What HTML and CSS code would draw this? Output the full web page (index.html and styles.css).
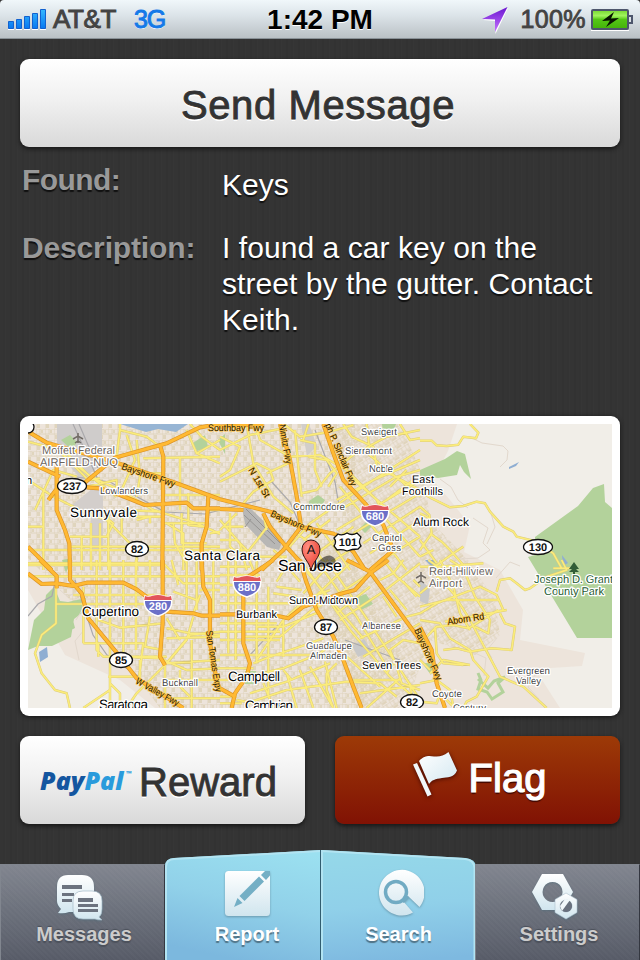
FILE: index.html
```html
<!DOCTYPE html>
<html lang="en">
<head>
<meta charset="utf-8">
<title>Found: Keys</title>
<link rel="stylesheet" href="styles.css">
</head>
<body>
<div class="screen">
  <header class="status">
    <div class="status-side">
      <svg class="signal" width="39" height="22" viewBox="0 0 39 22">
        <defs><linearGradient id="sig" x2="0" y2="1"><stop stop-color="#35b8ff"/><stop offset="1" stop-color="#0878f0"/></linearGradient></defs>
        <g fill="url(#sig)" stroke="#1261cf"><path d="M.5 13.500h5v7h-5zM8.500 11.500h5v9h-5zM16.500 8.500h5v12h-5zM24.500 5.500h5v15h-5zM32.500 1.500h5v19h-5z"/></g>
        <path d="M0 21.500h6M8 21.500h6M16 21.500h6M24 21.500h6M32 21.500h6" stroke="#fff"/>
      </svg>
      <span class="carrier">AT&amp;T</span><span class="network">3G</span>
    </div>
    <time class="clock">1:42 PM</time>
    <div class="status-side status-right">
      <svg class="arrow" width="27" height="28" viewBox="0 0 27 28">
        <defs><linearGradient id="purple" x2="0" y2="1"><stop stop-color="#6a16d0"/><stop offset="1" stop-color="#c773ff"/></linearGradient></defs>
        <path d="M1 14 26 2 13.500 28 13 15z" fill="#fff"/><path d="M0 13 25.500 1 13 26V13.500z" fill="url(#purple)"/>
      </svg>
      <span class="percent">100%</span>
      <svg width="43" height="22" viewBox="0 0 43 22">
        <defs><linearGradient id="batt" x2="0" y2="1"><stop stop-color="#74d62d"/><stop offset=".3" stop-color="#a1f45e"/><stop offset=".5" stop-color="#55c716"/><stop offset="1" stop-color="#43b20a"/></linearGradient></defs>
        <path d="M0 21.500h38" stroke="#fff"/>
        <rect x="1" y="1" width="36" height="19" rx="1" fill="url(#batt)" stroke="#4d566c" stroke-width="2"/>
        <path d="M38 7h3v7h-3" fill="#dce1e6" stroke="#4d566c" stroke-width="2"/>
        <path d="M23 3 11 12l8-.5L15 18 28 9l-8 .5z" fill="#071300"/>
      </svg>
    </div>
  </header>

  <main class="content">
    <button class="button button-light send"><span>Send Message</span></button>
    <dl class="details">
      <dt class="found">Found:</dt><dd class="item">Keys</dd>
      <dt class="desc-label">Description:</dt><dd class="desc">I found a car key on the street by the gutter. Contact Keith.</dd>
    </dl>

    <div class="map-card">
      <svg class="map" width="584" height="284" viewBox="28 424 584 284">
        <defs>
          <pattern id="blocks" width="9" height="11" patternUnits="userSpaceOnUse"><path d="M0 0h9M0 5h9M0 0v11M4 0v5" stroke="#dcd0b7" stroke-width=".8"/><path d="M1 6h3v4H1zM5 1h2v3H5z" fill="#e0d5bd"/></pattern>
          <pattern id="blocksTilt" width="8" height="9" patternUnits="userSpaceOnUse" patternTransform="rotate(-33)"><path d="M0 0h8M0 5h8M0 0v9M4 0v5" stroke="#dbceb3" stroke-width=".8"/><path d="M1 6h5v2H1z" fill="#e0d4bc"/></pattern>
          <g id="streets">
            <path transform="translate(20 410) scale(.3333)" d="M24 95 100 115 140 130 210 200 300 240 400 300 530 340 600 372M24 210 100 260 200 310 260 330 345 415M45 300 100 180 170 200M24 350H72M70 240V480M24 420H600M110 120 290 260M300 60V42M300 60 290 140M300 60 380 80 420 110M320 75 345 150 300 250M350 90 360 200 350 260M370 145 600 140M480 145V250 300M500 60 530 130 600 160M510 42 545 80 600 120M530 130 600 90M150 380H260L280 340 255 320M150 410H600M185 380V480M213 340V480M240 340V480M265 300V480M350 410V480M305 370V300L430 305M320 320H430M350 330 390 320V340M430 340H560M440 340 490 370V480M460 340 465 400 500 460M485 310V400H560M505 250V345L550 350M565 300H600M570 370 600 365M24 460H430M430 255H600M380 190H425V240M200 230 290 210 290 250M145 150 205 210 240 205"/>
            <path transform="translate(220 410) scale(.3333)" d="M80 42 100 160 160 260 220 310M0 215 110 160 150 180 160 210 100 245 70 280M0 80 60 110 30 180 0 200M0 120 90 75 190 55M105 42 120 90 210 140 300 135 380 180 470 270 500 330 600 440M195 45 240 80 330 65 400 45M205 160 140 190M225 60 235 170 245 260M245 250 290 240 330 190 400 135 500 80 600 60M200 420 270 340 430 230 600 120M240 90 285 100 285 180 305 230M265 140 320 150 350 190 325 230M370 42 395 80 460 110 470 170 600 240M440 42 450 130M430 120 600 260M390 200 600 380M360 230 490 390 560 480M350 270 460 210 600 150M360 300 530 200 600 180M350 360 600 210M400 370 600 250M430 400 600 290M450 430 600 330M470 460 600 380M0 360 50 310M0 330 60 400 80 480M30 310V410L60 440M130 310 140 360M150 340 80 430 100 480M0 390H50L100 440 200 440M0 420H80M10 350H70M230 370 270 400 330 480M290 340 350 420 390 480M160 420 230 480M250 390 330 330M290 430 400 350M330 460 420 400M250 90 265 42M540 42 570 90 600 85M510 230 560 180M500 270 580 210"/>
            <path transform="translate(420 410) scale(.3333)" d="M150 42 175 68 168 85 130 80 115 104 80 108 50 106 35 92H0M0 245 35 265 90 292 130 288 170 275 195 280 210 305 250 350 280 365 290 380 340 392 400 430 425 475M0 290 28 315 35 370 0 420M0 310 20 320 45 340M30 370 65 395 90 420 130 465M0 390 50 460M30 480 100 430 130 410M0 440 40 420M400 475H450"/>
            <path transform="translate(20 560) scale(.3333)" d="M108 50V190L65 225 45 280 65 340 105 390 140 400 150 444M24 15H430M24 49H600M110 132H440M160 105H440M190 80V250M190 250H235V290M230 0V60 270L250 290H440M270 0V400 444M310 0V300M348 0V270M390 0V60M390 170 375 260 430 270M235 180 300 203 430 190M190 250H370L355 370M310 290 420 295 500 330 600 325M435 315 510 225 600 215M435 315 350 400 320 444M440 205 510 220 600 225M440 175 480 240M440 235 600 230M430 10 490 70H600M455 0 475 75M500 0V70 150M530 0V70 150M580 0V160M520 170 500 240 440 310M515 240V380 444M440 310 600 300M480 330V380L510 410M265 350H340M270 370 300 400 300 444M270 390 190 444M360 360V300M435 315V444M440 415H600M435 360 600 360M540 90 600 90M540 105 520 160M460 95 530 120"/>
            <path transform="translate(220 560) scale(.3333)" d="M0 20H90M0 45H120M0 75H70M0 105H70M0 130H210M0 190H170M0 215H180M0 240H180M0 285H300M0 325H100M0 360H75M25 0V280M47 0V300M110 0V310M145 80V410M190 180V290M190 180 110 300M70 230H180L300 130M110 200H190L300 155M80 350 190 325 300 280 350 240M80 430 200 390 380 365 480 370 530 410M90 400 200 365 330 310M100 310 150 290 240 260 310 235M200 340 230 444M240 330 280 444M270 320 340 444M315 305 350 444M190 330 215 360M350 310 320 340 320 390 340 444M130 370 160 444M190 180 260 115 330 90M170 80 245 90M160 100 230 110M210 30 240 65M240 0 390 210 510 350 580 410M290 0 410 170 500 320M320 0 450 190 600 420M260 35 430 235M250 100 340 0M270 125 400 0M280 150 450 40M350 160 450 80M360 180 490 95 600 10M420 235 560 170 600 160M430 290 600 190M490 0 530 50 600 110M550 0 520 40 480 60M490 110 530 170M510 90 560 150M550 65 590 110M380 290 480 380M400 360 540 360M420 400 600 375M500 340 520 310M530 320 545 370 600 390M530 320 510 270 550 240 600 250M540 355 440 444M570 370 580 444M600 80 580 60M210 0 170 65M0 410H50M0 430H65M50 420 130 435"/>
            <path transform="translate(420 560) scale(.3333)" d="M25 0 60 25 50 60 0 100M50 45 100 100 150 180 240 350 310 380 380 444M60 0 100 80 120 160 150 210M90 0 130 25 165 110 210 180 205 220 165 200M0 20H60L190 10M0 140 80 120 235 120M0 160 50 130 180 80 230 105 250 150 230 155M230 95 240 60 270 55 290 70 315 90 330 85 380 50 440 30 425 0M75 185 260 150M0 250 50 200 100 195 145 205 235 150M0 180 60 190 90 235 150 270 160 300 205 350 170 410 140 425 130 444M45 200 50 280 70 310 130 315M70 270 110 265 150 275 215 265 275 270 285 200 255 190 240 160M0 300 30 330M30 340 70 300 150 315M0 425 50 430 60 400 100 440M0 370 50 360 90 390 100 440"/>
          </g>
          <g id="freeways">
            <path transform="translate(20 410) scale(.3333)" d="M24 65 80 98 290 158 470 220 600 268M24 155 120 200M180 230 285 143 440 100 540 52 600 42M200 232 240 235 300 255 375 285 500 278 520 295H600M110 170V300L135 360 148 400 150 480M85 270 115 230M420 105 430 140 427 480M565 260 560 350 545 400V480M24 410 95 480"/>
            <path transform="translate(220 410) scale(.3333)" d="M0 50 130 42M0 268 150 305 240 350 345 372M0 297 70 300M130 310 150 350 190 400 240 455M180 42 210 150 232 270 243 350 190 420 125 480M310 42 340 130 370 210 435 280 490 345 520 420 450 480M345 372 400 425 435 480"/>
            <path transform="translate(20 560) scale(.3333)" d="M24 40 65 72 110 70 160 78 200 68H310L350 88 440 155 520 160 545 167H600M60 0 110 48V85M150 0V60L185 100 205 175 300 290 350 355 490 444M428 0V190L420 290 435 316M545 0 550 80 570 120V250L590 360 600 390"/>
            <path transform="translate(220 560) scale(.3333)" d="M0 163H100M170 167 205 175 250 140 360 102 405 90 450 40 505 0M160 0 70 60V250L90 310 80 350 45 400 35 444M0 385 45 410M240 0 257 60 290 150 340 230 370 300 400 380 425 444M380 0 450 35 600 240"/>
            <path transform="translate(420 560) scale(.3333)" d="M0 202 35 270 50 370 75 444"/>
          </g>
          <radialGradient id="pin" cx=".35" cy=".25"><stop stop-color="#ff9287"/><stop offset="1" stop-color="#f25c4e"/></radialGradient>
          <g id="interstate"><path d="M-13-9C-9-7-5-10 0-10S9-7 13-9C16 2 10 8 0 11-10 8-16 2-13-9z" fill="#6b70c8" stroke="#fff" stroke-width="1.500"/><path d="M-13-9C-9-7-5-10 0-10S9-7 13-9L13.800-5H-13.800z" fill="#e2555a"/><path d="M-14-4.500h28" stroke="#fff"/></g>
        </defs>
        <rect x="28" y="424" width="584" height="284" fill="#f1eee8"/>
        <path d="M28 424H457L448 451 433 480 450 500 470 525 464 552 500 570 523 610 520 640 585 653 582 666 535 669 560 708H155L120 680 65 655 28 590z" fill="#ede4db"/>
        <path d="M28 424H355V570L400 655 360 708H160L105 635 60 590 28 558z" fill="url(#blocks)"/>
        <path d="M330 424H400L425 480 430 520 468 560 495 600 500 635 475 655 430 640 405 708H360L320 610 290 560 350 530z" fill="url(#blocksTilt)"/>
        <path d="M57 424h45v40l-20 16-25-28z" fill="#cfcccb"/><path d="M103 480V549H91V515L72 505z" fill="#d3cecb"/>
        <path d="M120 424h68l-12 8-18-3-12 3z" fill="#97b5d4"/><path d="M242 508l7-1 34 33-4 10-12-3-22-23z" fill="#b8b7b5"/>
        <path d="M246 509l34 34M244 515l31 29M251 519l-6 8M264 531l-7 8" stroke="#969493" fill="none"/>
        <path d="M301 424h8l8 22-10 10z" fill="#d2ceca"/><path d="M352 646l12-7 8 12-14 6zM420 580l10 8-2 17-8-4z" fill="#c9c9c9"/>
        <g fill="#b3d29b">
          <path d="M420 470 445 459 457 451 465 454 471 479 464 472 460 465 457 475 438 478 420 476V470zM535 537 578 506 593 488 604 484 605 502 612 508V638H577L528 557 535 555z"/>
          <path d="M28 650l6-30 10-10 2-15 8-8 6 14 8 1 18-4v12l-12 9-3 18-19 9-14 0zM61 440l9-5 7 7-5 8zM62 560l10-2-6 15zM309 501l9-6 7 5-4 7-12-1zM358 597l8-3 7 10-12 6zM382 424h14l-5 12-8-4zM218 440l7-6v20zM205 435l-12 8 4 8 11-4zM360 528l8-8 4 6-7 7zM62 620l10-4 3 12-10 5zM245 671h11v13h-11zM422 663l12 0-3 12z"/>
        </g>
        <path d="M478 673l3 7-3 9 9 3 5 7 11-7-5-9 7-6-11 4-6 7-10-9" fill="none" stroke="#b3d29b" stroke-width="3"/>
        <path d="M509 467l10-5-3 4-7 3zM562 555l6 8-5 3zM39 652l8-5 1 10-8 5zM425 560h9l4 5-5 3z" fill="#8faed2"/>
        <g fill="none" stroke="#e2d8cd"><path d="M470 437l12 6 21 3 5 5-1 9-7 7M440 479l11 8 7 13 10 8M473 518l15 10-5 15 7 7-12 8-19 1 3 8M520 566l-10-4-14 16M490 510l5 17-8 17M60 590l8 7 14-9 4 16-10 16M84 630l-9 11 4 19M497 638l-10 12 5 8M535 675l-7 12 11 12M468 650l18 8-2 18"/></g>
        <path d="M79 424l19 44M73 424l27 60M70 476l40 6 55 30 40 2 55-14M28 616l10-12 14-8 3-14M75 580l18 55 14 20 31 21M270 480l20 22 12 28M315 430l20 52 4 24M250 655l28-30M345 640l55 20" fill="none" stroke="#aaa9ac" stroke-width="1.200"/>
        <g fill="none" stroke-linejoin="round"><use href="#streets" stroke="#dccb78" stroke-width="7.500"/><use href="#streets" stroke="#fbec7b" stroke-width="4.800"/><use href="#freeways" stroke="#dc9427" stroke-width="12.500"/><use href="#freeways" stroke="#ffb932" stroke-width="8.500"/></g>

        <g class="road-name">
          <text x="208" y="431" textLength="56" lengthAdjust="spacingAndGlyphs">Southbay Fwy</text>
          <text transform="translate(121 469) rotate(19)" textLength="56" lengthAdjust="spacingAndGlyphs">Bayshore Fwy</text>
          <text transform="translate(270 516) rotate(23)" textLength="54" lengthAdjust="spacingAndGlyphs">Bayshore Fwy</text>
          <text transform="translate(279 425) rotate(80)" textLength="40" lengthAdjust="spacingAndGlyphs">Nimitz Fwy</text>
          <text transform="translate(325 425) rotate(67)" textLength="67" lengthAdjust="spacingAndGlyphs">ph P. Sinclair Fwy</text>
          <text transform="translate(248 470) rotate(59)" textLength="33" lengthAdjust="spacingAndGlyphs">N 1st St</text>
          <text transform="translate(206 631) rotate(81)" textLength="62" lengthAdjust="spacingAndGlyphs">San Tomas Expy</text>
          <text transform="translate(135 683) rotate(29)" textLength="48" lengthAdjust="spacingAndGlyphs">W Valley Fwy</text>
          <text transform="translate(414 630) rotate(66)" textLength="56" lengthAdjust="spacingAndGlyphs">Bayshore Fwy</text>
          <text transform="translate(448 625) rotate(-9)" textLength="37" lengthAdjust="spacingAndGlyphs">Aborn Rd</text>
        </g>
        <g class="place big">
          <text x="70" y="517" textLength="67">Sunnyvale</text><text x="184" y="560" textLength="76">Santa Clara</text><text x="82" y="616" textLength="57">Cupertino</text><text x="228" y="681" textLength="52">Campbell</text><text x="99" y="709" textLength="49">Saratoga</text><text x="245" y="710" textLength="48">Cambrian</text><text class="smaller" x="413" y="526" textLength="56">Alum Rock</text>
        </g>
        <text class="place city" x="278" y="571" textLength="64">San Jose</text>
        <g class="place medium">
          <text x="412" y="483" textLength="22">East</text><text x="402" y="495" textLength="41">Foothills</text><text x="289" y="604" textLength="69">Sunol-Midtown</text><text x="236" y="618" textLength="41">Burbank</text><text x="362" y="669" textLength="59">Seven Trees</text><text x="26" y="484">n</text>
        </g>
        <g class="place small">
          <text x="100" y="494" textLength="48">Lowlanders</text><text x="293" y="510" textLength="52">Commodore</text><text x="361" y="435" textLength="36">Sweigert</text><text x="345" y="454" textLength="47">Sierramont</text><text x="369" y="472" textLength="24">Noble</text><text x="372" y="541" textLength="30">Capitol</text><text x="372" y="551" textLength="29">- Goss</text><text x="362" y="629" textLength="39">Albanese</text><text x="306" y="649" textLength="46">Guadalupe</text><text x="310" y="659" textLength="37">Almaden</text><text x="162" y="686" textLength="36">Bucknall</text><text x="507" y="674" textLength="43">Evergreen</text><text x="516" y="684" textLength="25">Valley</text><text x="432" y="697" textLength="30">Coyote</text><text x="453" y="711" textLength="33">Century</text>
        </g>
        <g class="place airport">
          <text x="42" y="454" textLength="73">Moffett Federal</text><text x="40" y="466" textLength="78">AIRFIELD-NUQ</text><text x="429" y="575" textLength="64">Reid-Hillview</text><text x="429" y="587" textLength="33">Airport</text>
        </g>
        <g class="place park"><text x="534" y="583" textLength="79">Joseph D. Grant</text><text x="544" y="595" textLength="60">County Park</text></g>
        <path d="M78 433v10M73 439l5-3 5 3M75 443l3-2 3 2M421 572v10M416 578l5-3 5 3M418 583l3-2 3 2" stroke="#716b65" stroke-width="1.500" fill="none"/>
        <path d="M574 562l-5 7h3l-3 3h4v2h2v-2h4l-3-3h3z" fill="#315d37"/>

        <g fill="#fff" stroke="#111" stroke-width="1.300"><circle cx="28" cy="427" r="6"/><ellipse cx="72" cy="486" rx="14.500" ry="7.500"/><ellipse cx="137" cy="549" rx="11.500" ry="7.500"/><ellipse cx="538" cy="547" rx="14.500" ry="7.500"/><ellipse cx="326" cy="627" rx="11.500" ry="7.500"/><ellipse cx="121" cy="660" rx="11.500" ry="7.500"/><ellipse cx="412" cy="702" rx="11.500" ry="7.500"/><path d="M338 534q4 2 9-1 5 3 10 0l4 4q-3 5 0 9l-3 3q-6 0-11 2-5-2-10-1l-3-4q3-4 0-8z"/></g>
        <use href="#interstate" x="375" y="515"/><use href="#interstate" x="247" y="586"/><use href="#interstate" x="158" y="605"/>
        <g class="shield"><text x="72" y="490">237</text><text x="137" y="553">82</text><text x="538" y="551">130</text><text x="326" y="631">87</text><text x="121" y="664">85</text><text x="412" y="706">82</text><text x="348" y="546">101</text><text class="inverse" x="375" y="520">680</text><text class="inverse" x="247" y="591">880</text><text class="inverse" x="158" y="610">280</text></g>
        <path d="M313 570q4-9 11-13t11 2-16 8z" fill="#000" opacity=".5"/>
        <path d="M311 571C310 562 302 558 302 549a9 9 0 0 1 18 0C320 558 312 562 311 571z" fill="url(#pin)" stroke="#351310"/>
        <text class="pin-letter" x="311" y="554">A</text>
      </svg>
    </div>

    <div class="actions">
      <button class="button button-light reward"><span class="paypal"><b>Pay</b><i>Pal</i><sup>™</sup></span><span>Reward</span></button>
      <button class="button button-red flag">
        <svg width="48" height="50" viewBox="0 0 48 50">
          <defs><linearGradient id="flagFill" x2="1" y2="1"><stop stop-color="#fff"/><stop offset="1" stop-color="#d3e8f1"/></linearGradient></defs>
          <path d="M1 14.500 5 13 19.500 44.500 15.500 46.500z" fill="#f1f8fb"/><path d="M7 11C13 5 17 6 22 6.500 28 7 31 6 36.500 2L45 20.500C42 28 35 27 30 28 23 29 20 30 17 34z" fill="url(#flagFill)"/>
        </svg><span>Flag</span>
      </button>
    </div>
  </main>

  <nav class="tabs">
    <a class="tab tab-wide tab-messages">
      <svg class="tab-icon" width="50" height="50" viewBox="54 872 50 50">
        <defs><linearGradient id="ice" x2="0" y2="1"><stop stop-color="#fff"/><stop offset="1" stop-color="#d0e5ee"/></linearGradient></defs>
        <path d="M68 875H82Q94 875 94 887V901Q94 912 82 912H69Q64 914 58 913L61 909Q57 905 57 901V887Q57 875 68 875z" fill="url(#ice)"/>
        <path d="M62 885h20v4H62zM62 893h12v3H62zM62 899h10v3H62z" fill="#6c737f"/>
        <path d="M83 891H92Q102 891 102 901V909Q102 915 99 917L102 920Q97 920 95 919H83Q73 919 73 909V901Q73 891 83 891z" fill="url(#ice)" stroke="#a5bac7" stroke-width=".7"/>
        <path d="M78 898h15v4H78zM78 904h20v3H78zM78 909h20v3H78z" fill="#6c737f"/>
      </svg><span>Messages</span>
    </a>
    <a class="tab tab-active">
      <svg class="tab-shape" width="156" height="110" viewBox="0 0 156 110">
        <defs><linearGradient id="blueL" x1=".8" y1="0" x2=".5" y2="1"><stop stop-color="#9be0f0"/><stop offset=".5" stop-color="#91d1e9"/><stop offset="1" stop-color="#7cb8de"/></linearGradient></defs>
        <path d="M0 111V16Q0 8.500 9 8L156 0V111z" fill="url(#blueL)"/><path d="M1 110V17Q1 9.500 9 9L156 1" fill="none" stroke="#b2e4f2" stroke-width="2"/>
      </svg>
      <svg class="tab-icon" width="50" height="50" viewBox="222 868 50 50">
        <rect x="225" y="871" width="45" height="45" rx="3.500" fill="url(#ice)"/>
        <path d="M234 907l3.500-9 5 5zM239.500 896 259 876.500 264 881.500 244.500 901zM261 875 265 871h5v4.500L266 880z" fill="#74afc5"/>
      </svg><span>Report</span>
    </a>
    <a class="tab tab-active tab-second">
      <svg class="tab-shape" width="155" height="110" viewBox="0 0 155 110">
        <defs><linearGradient id="blueR" x1=".4" x2=".5" y2="1"><stop stop-color="#95d8e9"/><stop offset=".5" stop-color="#90d0e9"/><stop offset="1" stop-color="#7eb9e0"/></linearGradient></defs>
        <path d="M0 111V0L144 8Q155 9 155 17V111z" fill="url(#blueR)"/><path d="M1 110V1L144 9Q153 10 153.500 18V110" fill="none" stroke="#b2e4f2" stroke-width="2"/>
      </svg>
      <svg class="tab-icon" width="50" height="50" viewBox="374 868 50 50">
        <path d="M413 912.500A22.800 22.800 0 1 1 419.500 907L408 896 403 901z" fill="url(#ice)"/>
        <circle cx="396" cy="892" r="10.500" fill="none" stroke="#71abc3" stroke-width="3.500"/><path d="M402.500 902l5.500-5.500" stroke="#71abc3" stroke-width="3"/>
      </svg><span>Search</span>
    </a>
    <a class="tab tab-wide tab-settings">
      <svg class="tab-icon" width="50" height="50" viewBox="530 872 50 50">
        <path d="M542 874h21l10 18-10 18H542l-10-18zM552.500 882a10 10 0 1 0 .1 0z" fill="url(#ice)" fill-rule="evenodd"/>
        <path d="M566 893l11 6.500v13L566 919l-11-6.500v-13zM566 900a6 6 0 1 0 .1 0z" fill="url(#ice)" fill-rule="evenodd" stroke="#acc0cc" stroke-width=".6"/>
        <circle cx="566" cy="906" r="6" fill="#69717e"/><path d="M562 911l8-11-5-1-5 7z" fill="#f2f8fb"/>
      </svg><span>Settings</span>
    </a>
  </nav>
</div>
</body>
</html>
```

FILE: styles.css
```css
* { box-sizing: border-box; }
body { margin: 0; font-family: "Liberation Sans", Arial, sans-serif; background: #000; }
.screen { width: 640px; height: 960px; display: flex; flex-direction: column; overflow: hidden; background: repeating-linear-gradient(90deg, #343434 0 3px, #333 3px 5px, #363636 5px 6px, #343434 6px 10px, #323232 10px 12px); }
.status { height: 39px; flex: none; display: grid; grid-template-columns: 1fr auto 1fr; align-items: center; padding: 0 6px 0 8px; background: linear-gradient(#f0f7fa, #dce4e9 40%, #bac1c5); border-bottom: 1px solid #899196; border-radius: 4px 4px 0 0; text-shadow: 0 1px #fff; }
.status-side { display: flex; align-items: center; padding-top: 1px; }
.status-right { justify-content: flex-end; }
.signal { margin-bottom: 2px; }
.carrier { font-size: 26px; color: #434343; margin-left: 6px; letter-spacing: -.4px; -webkit-text-stroke: 1px #434343; }
.network { font-size: 25px; margin-left: 18px; letter-spacing: -1px; color: #1479e8; -webkit-text-stroke: 1px #1479e8; }
.clock { font-size: 28px; font-weight: bold; color: #000; padding-top: 1px; margin-left: -2px; }
.arrow { margin-right: 11px; }
.percent { font-size: 25px; letter-spacing: .4px; margin-right: 5px; color: #434343; -webkit-text-stroke: .9px #434343; }
.content { padding: 20px 20px 0; height: 811px; flex: none; }
.button { display: flex; align-items: center; justify-content: center; width: 100%; height: 88px; border: 0; padding: 4px 0 0; border-radius: 9px; font: 40px "Liberation Sans", Arial, sans-serif; box-shadow: 0 2px 4px #171717; }
.button-light { color: #333; -webkit-text-stroke: .9px #333; text-shadow: 0 2px #fff; background: linear-gradient(#fff, #f1f1f1 45%, #d9d9d9); }
.button-red { color: #fff; -webkit-text-stroke: 1.2px #fff; text-shadow: 0 2px 1px #400800; background: linear-gradient(#9d3a07, #811204); }
.send { letter-spacing: .6px; padding-right: 4px; }
.details { display: grid; grid-template-columns: 200px 1fr; margin: 0; height: 269px; padding: 15px 2px 0; align-content: start; font-size: 30px; line-height: 36px; text-shadow: 0 2px 1px #111; }
.details dt { color: #999; font-weight: bold; letter-spacing: -.15px; }
.details .found { letter-spacing: -.6px; }
.details dd { margin: 0; color: #fff; }
.item { padding-top: 5px; }
.desc-label, .desc { padding-top: 27px; }
.desc { letter-spacing: .06px; }
.map-card { height: 300px; padding: 8px; border-radius: 9px; background: #fff; box-shadow: 0 1px 4px #151515; }
.map { display: block; text-rendering: geometricPrecision; }
.place { fill: #000; stroke: #fff; stroke-width: 2.5px; paint-order: stroke; stroke-linejoin: round; font-size: 12px; }
.big { font-size: 13.5px; }
.smaller { font-size: 12px; }
.city { font-size: 16px; }
.medium { font-size: 11px; }
.small { font-size: 9.7px; fill: #444; }
.airport { font-size: 11.2px; fill: #6b645d; }
.park { font-size: 11.2px; fill: #255b32; }
.road-name { font-size: 9.5px; fill: #1b1505; stroke: #ffc64b; stroke-width: 1.2px; paint-order: stroke; }
.shield { font-size: 11px; font-weight: bold; text-anchor: middle; fill: #111; }
.inverse { fill: #fff; }
.pin-letter { font-size: 13px; text-anchor: middle; fill: #111; }
.actions { display: grid; grid-template-columns: 1fr 1fr; gap: 30px; margin-top: 20px; }
.reward { gap: 8px; padding-right: 8px; }
.paypal { position: relative; width: 91px; font: italic 800 25px "Open Sans", sans-serif; text-align: left; letter-spacing: 0; margin-top: -4px; text-shadow: none; -webkit-text-stroke: 0; color: #299bdc; }
.paypal b { color: #1456a0; font-weight: 800; }
.paypal sup { position: absolute; right: 0; top: 7px; font-size: 7px; line-height: 1; }
.flag { gap: 9px; padding: 0 0 4px 3px; }
.flag svg { margin-top: -6px; filter: drop-shadow(0 1px 2px #450800); }
.tabs { display: grid; grid-template-columns: 165px 155px 155px 165px; align-items: end; height: 110px; flex: none; }
.tab { position: relative; height: 96px; display: flex; flex-direction: column; align-items: center; padding-top: 7px; color: #ccc; font-size: 20px; font-weight: bold; line-height: 24px; text-shadow: 0 -1px 1px #4b505a, 0 2px 1px #4b505a; }
.tab-wide { border: 1px solid #81868f; border-bottom: 0; border-right-color: #343740; background: repeating-linear-gradient(45deg, #ffffff05 0 2px, transparent 2px 4px), linear-gradient(#81858f, #6b707b 50%, #575b67); }
.tab-messages { padding-left: 3px; }
.tab-messages .tab-icon { left: -5px; }
.tab-settings { padding-left: 3px; }
.tab-settings .tab-icon { left: -4px; }
.tab-active { height: 110px; padding-top: 18px; padding-left: 9px; color: #fff; text-shadow: 0 2px 1px #4f7184; }
.tab-active span { margin-top: 4px; }
.tab-second { padding-left: 1px; border-left: 1px solid #315d70; }
.tab-shape { position: absolute; left: 0; top: 0; }
.tab-icon { position: relative; flex: none; filter: drop-shadow(0 1px 1px #4d6c7c88); }
.tab span { position: relative; }
```
